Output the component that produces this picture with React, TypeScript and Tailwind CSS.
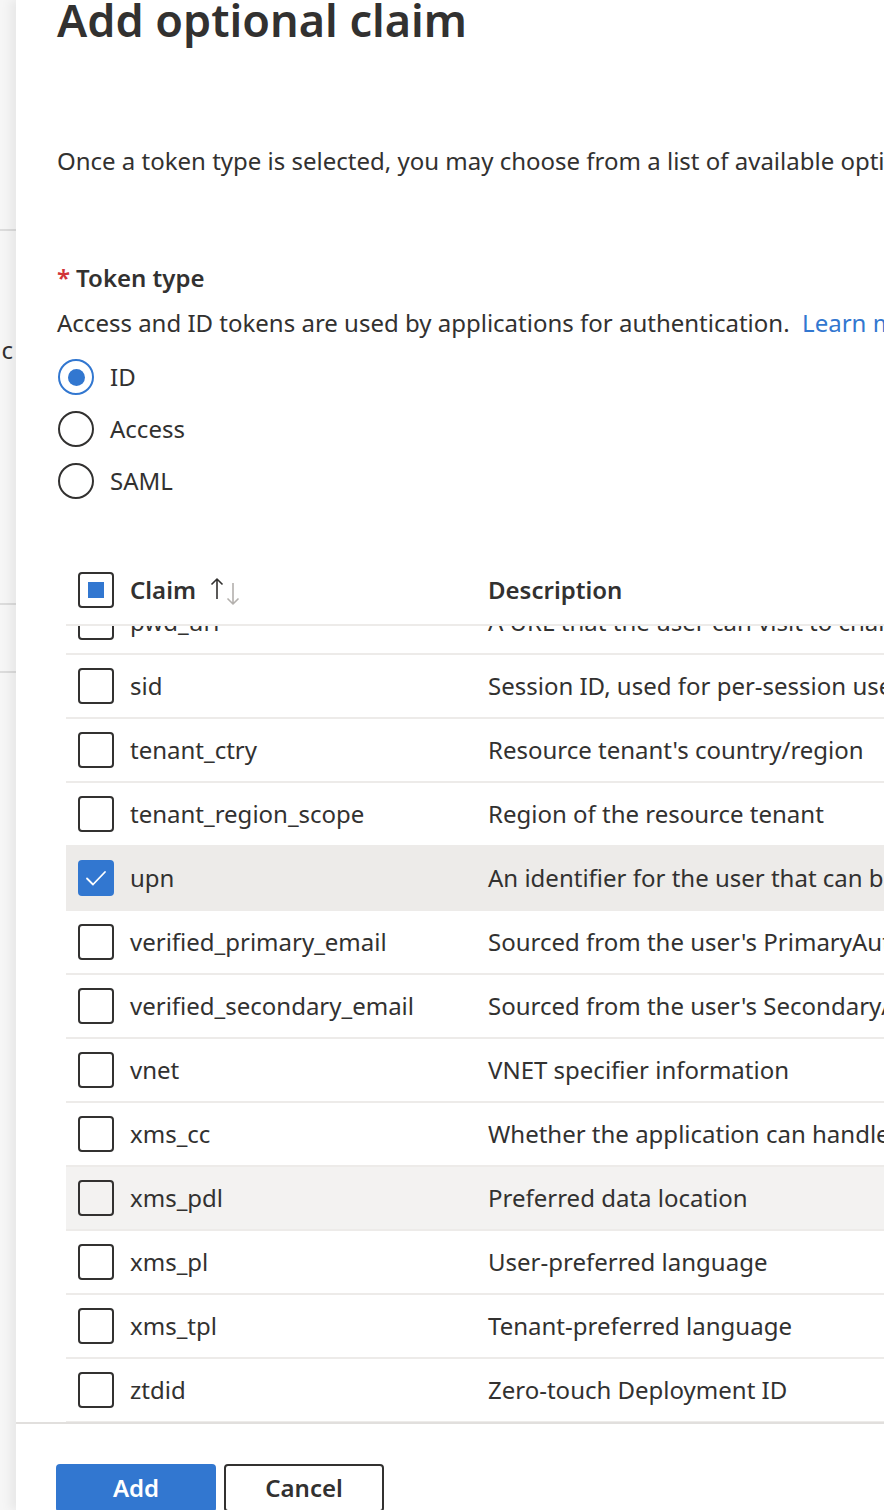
import React from 'react';

const rows = [
  { claim: 'pwd_url', desc: 'A URL that the user can visit to change their password' },
  { claim: 'sid', desc: 'Session ID, used for per-session user sign-out' },
  { claim: 'tenant_ctry', desc: "Resource tenant's country/region" },
  { claim: 'tenant_region_scope', desc: 'Region of the resource tenant' },
  { claim: 'upn', desc: 'An identifier for the user that can be used with the username_hint parameter', checked: true },
  { claim: 'verified_primary_email', desc: "Sourced from the user's PrimaryAuthoritativeEmail" },
  { claim: 'verified_secondary_email', desc: "Sourced from the user's SecondaryAuthoritativeEmail" },
  { claim: 'vnet', desc: 'VNET specifier information' },
  { claim: 'xms_cc', desc: 'Whether the application can handle claims challenges' },
  { claim: 'xms_pdl', desc: 'Preferred data location', hover: true },
  { claim: 'xms_pl', desc: 'User-preferred language' },
  { claim: 'xms_tpl', desc: 'Tenant-preferred language' },
  { claim: 'ztdid', desc: 'Zero-touch Deployment ID' },
];

function Checkbox({ checked, partial }: { checked?: boolean; partial?: boolean }) {
  if (checked) {
    return (
      <div className="w-[36px] h-[36px] rounded-[4px] bg-[#3277d0] flex items-center justify-center shrink-0">
        <svg width="24" height="24" viewBox="0 0 24 24" fill="none">
          <path d="M3 12.5l6 6L21 6" stroke="white" strokeWidth="1.8" strokeLinecap="round" strokeLinejoin="round" />
        </svg>
      </div>
    );
  }
  return (
    <div className="w-[36px] h-[36px] rounded-[4px] border-2 border-[#323130] flex items-center justify-center shrink-0">
      {partial && <div className="w-[16px] h-[16px] bg-[#3277d0]" />}
    </div>
  );
}

function Radio({ label, selected }: { label: string; selected?: boolean }) {
  return (
    <div className="flex items-center h-[52px]">
      <div
        className={`w-[36px] h-[36px] rounded-full border-2 flex items-center justify-center ${selected ? 'border-[#3277d0]' : 'border-[#323130]'}`}
      >
        {selected && <div className="w-[17px] h-[17px] rounded-full bg-[#3277d0]" />}
      </div>
      <span className="ml-[16px]">{label}</span>
    </div>
  );
}

export default function App() {
  return (
    <div
      className="w-[884px] h-[1510px] overflow-hidden flex bg-white text-[#323130] text-[24px]"
      style={{ fontFamily: '"Noto Sans", "Open Sans", sans-serif' }}
    >
      {/* background blade peeking out on the left */}
      <div className="w-[16px] shrink-0 bg-[#f6f6f6] flex flex-col overflow-hidden">
        <div className="h-[231px] border-b-2 border-[#dcdcdc]" />
        <div className="h-[99px]" />
        <div className="flex justify-end pr-[3px] whitespace-nowrap text-[24px] leading-[40px]">c</div>
        <div className="h-[235px] border-b-2 border-[#dcdcdc]" />
        <div className="h-[68px] border-b-2 border-[#dcdcdc]" />
      </div>

      <div className="flex-1 flex flex-col shadow-[-6px_0_10px_rgba(0,0,0,0.06)] min-w-0">
        <div className="pl-[41px] whitespace-nowrap">
          <h1 className="text-[45px] font-semibold leading-none -mt-[3px] h-[57px]">Add optional claim</h1>

          <p className="mt-[90px] leading-[34px]">
            Once a token type is selected, you may choose from a list of available options.
          </p>

          <div className="mt-[83px] leading-[34px] font-semibold">
            <span className="text-[#d13438] mr-[6px]">*</span>Token type
          </div>
          <p className="mt-[11px] leading-[34px]">
            Access and ID tokens are used by applications for authentication.&nbsp;&nbsp;
            <span className="text-[#3277d0]">Learn more</span>
          </p>

          <div className="mt-[11px] pl-[1px] flex flex-col">
            <Radio label="ID" selected />
            <Radio label="Access" />
            <Radio label="SAML" />
          </div>
        </div>

        {/* table */}
        <div className="ml-[50px] mt-[49px] whitespace-nowrap">
          <div className="h-[70px] flex items-center border-b-2 border-[#edebe9] pl-[12px] font-semibold">
            <Checkbox partial />
            <div className="ml-[16px] w-[358px] shrink-0 flex items-center">
              <span>Claim</span>
              <svg width="36" height="30" viewBox="0 0 36 30" className="ml-[14px] mt-[2px]" fill="none">
                <path d="M7 23V3M1.5 8.5L7 3l5.5 5.5" stroke="#323130" strokeWidth="1.6" strokeLinejoin="round" />
                <path d="M23 7v21M17.5 22.5L23 28l5.5-5.5" stroke="#b3b0ad" strokeWidth="1.6" strokeLinejoin="round" />
              </svg>
            </div>
            <span>Description</span>
          </div>
          <div className="h-[796px] overflow-hidden">
            <div className="-mt-[35px]">
              {rows.map((r) => (
                <div
                  key={r.claim}
                  className={`h-[64px] flex items-center border-b-2 border-[#edebe9] pl-[12px] ${r.checked ? 'bg-[#edebe9]' : r.hover ? 'bg-[#f3f2f1]' : ''}`}
                >
                  <Checkbox checked={r.checked} />
                  <span className="ml-[16px] w-[358px] shrink-0">{r.claim}</span>
                  <span>{r.desc}</span>
                </div>
              ))}
            </div>
          </div>
        </div>

        <div className="border-t-2 border-[#e1dfdd] pl-[40px] pt-[40px] flex gap-[8px]">
          <button className="w-[160px] h-[48px] rounded-[4px] bg-[#3277d0] text-white font-semibold">Add</button>
          <button className="w-[160px] h-[48px] rounded-[4px] border-2 border-[#323130] font-semibold">Cancel</button>
        </div>
      </div>
    </div>
  );
}
